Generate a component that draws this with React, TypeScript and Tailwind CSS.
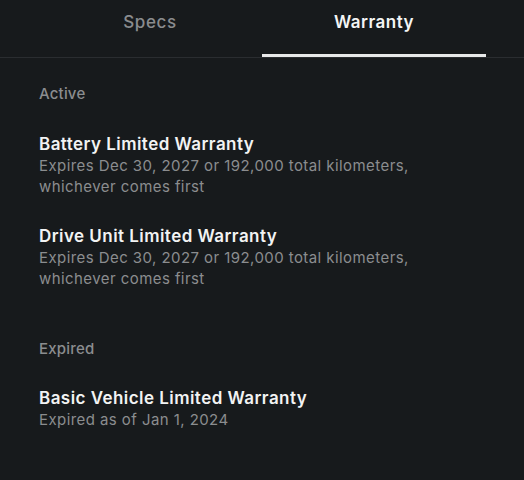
import React from "react";

const font = { fontFamily: "Inter, 'Noto Sans', sans-serif" };

function Item({ title, lines }: { title: string; lines: string[] }) {
  return (
    <div className="flex flex-col">
      <div className="text-[17px] leading-[22px] font-semibold text-[#f2f3f3] tracking-[0.45px]">{title}</div>
      <div className="text-[15px] leading-[21px] text-[#8b8d8f] tracking-[0.43px]">
        {lines.map((l) => (
          <div key={l}>{l}</div>
        ))}
      </div>
    </div>
  );
}

export default function App() {
  return (
    <div style={font} className="w-[524px] h-[480px] bg-[#171a1c] overflow-hidden">
      <div className="flex px-[38px] border-b border-[#2a2d30]">
        <div className="flex-1 h-[57px] flex justify-center pt-[10px]">
          <span className="text-[17px] leading-[24px] font-medium text-[#8a8c8e] tracking-[0.6px]">Specs</span>
        </div>
        <div className="flex-1 h-[57px] flex justify-center pt-[10px] relative">
          <span className="text-[17px] leading-[24px] font-semibold text-[#f4f5f5] tracking-[0.5px]">Warranty</span>
          <div className="absolute left-0 right-0 bottom-0 h-[3px] bg-[#e8e9e9]" />
        </div>
      </div>
      <div className="px-[39px] pt-[26px] flex flex-col">
        <div className="text-[15px] leading-[20px] text-[#8b8d8f] font-medium tracking-[0.2px]">Active</div>
        <div className="mt-[29px]">
          <Item
            title="Battery Limited Warranty"
            lines={["Expires Dec 30, 2027 or 192,000 total kilometers,", "whichever comes first"]}
          />
        </div>
        <div className="mt-[28px]">
          <Item
            title="Drive Unit Limited Warranty"
            lines={["Expires Dec 30, 2027 or 192,000 total kilometers,", "whichever comes first"]}
          />
        </div>
        <div className="mt-[50px] text-[15px] leading-[20px] text-[#8b8d8f] font-medium tracking-[0.2px]">Expired</div>
        <div className="mt-[28px]">
          <Item title="Basic Vehicle Limited Warranty" lines={["Expired as of Jan 1, 2024"]} />
        </div>
      </div>
    </div>
  );
}
